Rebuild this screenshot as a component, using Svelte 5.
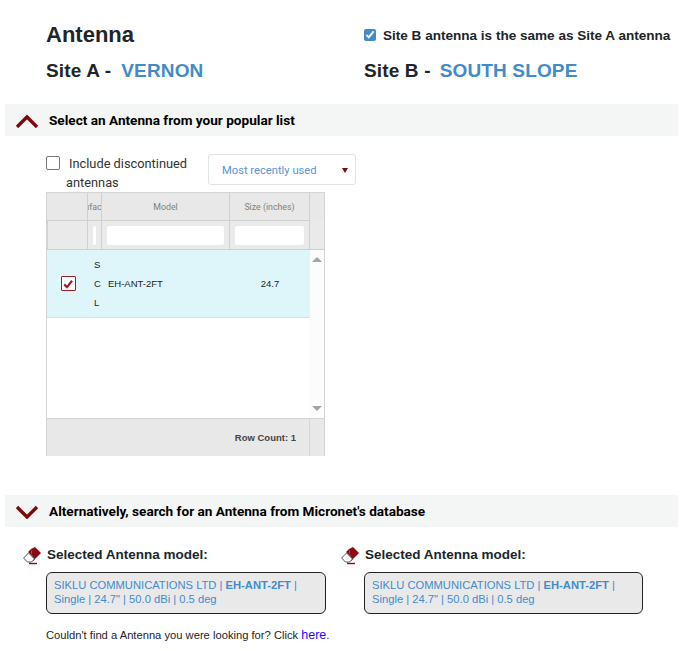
<script lang="ts">
	const selected = [1, 2];
</script>

<div class="page">
	<header class="head">
		<div class="head-col">
			<h1>Antenna</h1>
			<div class="site">Site A -<span class="site-name">VERNON</span></div>
		</div>
		<div class="head-col right">
			<label class="same">
				<input type="checkbox" checked />
				<span>Site B antenna is the same as Site A antenna</span>
			</label>
			<div class="site">Site B -<span class="site-name tight">SOUTH SLOPE</span></div>
		</div>
	</header>

	<section class="bar">
		<svg class="chevron" viewBox="0 0 24 14" width="24" height="14">
			<path d="M2 13 L12 3 L22 13" fill="none" stroke="#7d0a0a" stroke-width="3.4" />
		</svg>
		<span>Select an Antenna from your popular list</span>
	</section>

	<div class="filters">
		<label class="discontinued">
			<span class="box"></span>
			<span class="first">Include discontinued</span>
			<span class="second">antennas</span>
		</label>
		<div class="select">
			<span>Most recently used</span>
			<i class="caret"></i>
		</div>
	</div>

	<div class="grid">
		<div class="row header">
			<div class="c check"></div>
			<div class="c manuf"><span class="clipped">ufac</span></div>
			<div class="c model">Model</div>
			<div class="c size">Size (inches)</div>
			<div class="c tail"></div>
		</div>
		<div class="row filter">
			<div class="c check"></div>
			<div class="c manuf"><i class="field"></i></div>
			<div class="c model"><i class="field"></i></div>
			<div class="c size"><i class="field"></i></div>
			<div class="c tail"></div>
		</div>
		<div class="viewport">
			<div class="rows">
				<div class="row data">
					<div class="c check">
						<span class="tick">
							<svg viewBox="0 0 12 12" width="12" height="12">
								<path d="M2.2 6.4 L5 9.2 L10 2.8" fill="none" stroke="#a01c28" stroke-width="2.2" />
							</svg>
						</span>
					</div>
					<div class="c manuf"><span class="stack">S<br />C<br />L</span></div>
					<div class="c model">EH-ANT-2FT</div>
					<div class="c size">24.7</div>
				</div>
			</div>
			<div class="scroll">
				<i class="up"></i>
				<i class="down"></i>
			</div>
		</div>
		<div class="footer">
			<div class="count">Row Count: 1</div>
			<div class="tail"></div>
		</div>
	</div>

	<section class="bar second-bar">
		<svg class="chevron" viewBox="0 0 24 14" width="24" height="14">
			<path d="M2 2 L12 12 L22 2" fill="none" stroke="#7d0a0a" stroke-width="3.4" />
		</svg>
		<span>Alternatively, search for an Antenna from Micronet's database</span>
	</section>

	<div class="picked">
		{#each selected as id (id)}
			<div class="pick">
				<div class="pick-title">
					<svg class="eraser" viewBox="0 0 18 18" width="18" height="18">
						<path d="M8 2 L12 0 L18 6 L10 14 Z" fill="#8c0a14" />
						<path d="M8 2 L5 5 L12 12 L10 14 Z" fill="#8c0a14" />
						<path d="M0.6 11 L5.5 6 L11.5 12 L8.6 15 L4.4 15 Z" fill="#fff" stroke="#555" stroke-width="1" />
						<path d="M6 16.5 H14" stroke="#8c0a14" stroke-width="1.4" />
					</svg>
					<span>Selected Antenna model:</span>
				</div>
				<div class="pick-box">
					SIKLU COMMUNICATIONS LTD | <b>EH-ANT-2FT</b> | Single | 24.7" | 50.0 dBi | 0.5 deg
				</div>
			</div>
		{/each}
	</div>

	<p class="missing">Couldn't find a Antenna you were looking for? Click <a href="#here">here</a>.</p>
</div>

<style>
	:global(body) {
		margin: 0;
		background: #fff;
		font-family: "Liberation Sans", Arial, sans-serif;
		color: #212529;
	}

	.page {
		width: 680px;
		height: 651px;
		overflow: hidden;
		padding-top: 21px;
		box-sizing: border-box;
	}

	.head {
		display: flex;
		padding-left: 46px;
	}

	.head-col {
		width: 318px;
	}

	.head-col.right {
		width: 316px;
	}

	h1 {
		margin: 0;
		height: 28px;
		font-size: 22px;
		line-height: 28px;
		font-weight: 700;
	}

	.same {
		display: flex;
		align-items: center;
		height: 28px;
		font-size: 13.55px;
		font-weight: 700;
		white-space: nowrap;
	}

	.same input {
		width: 12px;
		height: 12px;
		margin: 0 7px 0 0;
		accent-color: #428bca;
	}

	.site {
		margin-top: 10px;
		font-size: 19px;
		line-height: 24px;
		font-weight: 700;
		letter-spacing: 0.15px;
	}

	.site-name {
		margin-left: 10px;
		color: #428bca;
	}

	.site-name.tight {
		margin-left: 9px;
	}

	.bar {
		display: flex;
		align-items: center;
		height: 32px;
		margin: 21px 2px 0 5px;
		background: #f4f5f5;
		font-family: Roboto, sans-serif;
		font-size: 13.6px;
		font-weight: 700;
		color: #000;
	}

	.chevron {
		margin: 2px 10px 0 10px;
		flex: none;
	}

	.filters {
		display: flex;
		margin: 18px 0 0 46px;
		height: 38px;
	}

	.discontinued {
		position: relative;
		display: block;
		width: 162px;
		font-family: Roboto, sans-serif;
		font-size: 12.8px;
		color: #333;
	}

	.box {
		position: absolute;
		left: 0;
		top: 2px;
		width: 12px;
		height: 12px;
		border: 1px solid #777;
		border-radius: 2px;
	}

	.first {
		position: absolute;
		left: 23px;
		top: 2px;
		white-space: nowrap;
	}

	.second {
		position: absolute;
		left: 20px;
		top: 21px;
	}

	.select {
		display: flex;
		align-items: center;
		justify-content: space-between;
		box-sizing: border-box;
		width: 148px;
		height: 31px;
		padding: 1px 7px 0 13px;
		border: 1px solid #e3e3e3;
		border-radius: 3px;
		font-family: Roboto, sans-serif;
		font-size: 11.2px;
		color: #5b93d3;
	}

	.caret {
		width: 0;
		height: 0;
		border: 3px solid transparent;
		border-top: 5px solid #7d0a0a;
		border-bottom: 0;
	}

	.grid {
		box-sizing: border-box;
		width: 279px;
		height: 264px;
		margin-left: 46px;
		border: 1px solid #d4d4d4;
		border-top: 0;
		font-size: 9.5px;
	}

	.row {
		display: flex;
		box-sizing: border-box;
	}

	.c {
		display: flex;
		align-items: center;
		justify-content: center;
		box-sizing: border-box;
		overflow: hidden;
	}

	.check {
		width: 41px;
	}

	.manuf {
		width: 14px;
	}

	.model {
		width: 128px;
	}

	.size {
		width: 80px;
	}

	.tail {
		width: 14px;
		flex: none;
	}

	.header {
		height: 29px;
		background: #e8e8e8;
		color: #7f7f7f;
		border-top: 1px solid #d4d4d4;
		font-family: Roboto, sans-serif;
		font-size: 8.8px;
	}

	.header .c,
	.filter .c {
		border-right: 1px solid #d0d0d0;
		border-bottom: 1px solid #d0d0d0;
	}

	.header .tail,
	.filter .tail {
		border-right: 0;
		border-bottom: 0;
	}

	.clipped {
		margin-left: -3px;
		white-space: nowrap;
	}

	.filter {
		height: 29px;
		background: #eaeaea;
		box-shadow: inset 1px 0 0 #d0d0d0;
	}

	.filter .c {
		border-bottom: 1px solid #cfcfcf;
	}

	.filter .tail {
		border-bottom: 1px solid #cfcfcf;
	}

	.field {
		display: block;
		height: 19px;
		background: #fff;
		border-radius: 2px;
	}

	.filter .manuf .field {
		width: 3px;
	}

	.filter .model .field {
		width: 117px;
	}

	.filter .size .field {
		width: 69px;
	}

	.viewport {
		display: flex;
		height: 169px;
		box-sizing: border-box;
		border-bottom: 1px solid #d4d4d4;
	}

	.rows {
		flex: 1;
	}

	.scroll {
		position: relative;
		width: 15px;
		background: #fcfcfc;
	}

	.up,
	.down {
		position: absolute;
		left: 2px;
		width: 0;
		height: 0;
		border: 5px solid transparent;
	}

	.up {
		top: 7px;
		border-top: 0;
		border-bottom: 5px solid #a3a3a3;
	}

	.down {
		bottom: 7px;
		border-bottom: 0;
		border-top: 5px solid #a3a3a3;
	}

	.data {
		height: 68px;
		background: #def6f9;
		border-bottom: 1px solid #dedede;
		color: #222;
	}

	.data .model {
		justify-content: flex-start;
		padding-left: 6px;
	}

	.stack {
		margin-left: 5px;
		line-height: 19px;
	}

	.tick {
		display: flex;
		align-items: center;
		justify-content: center;
		box-sizing: border-box;
		width: 15px;
		height: 15px;
		margin-left: 1px;
		background: #fff;
		border: 1px solid #a01c28;
		border-radius: 1px;
	}

	.footer {
		display: flex;
		height: 37px;
		background: #e8e8e8;
	}

	.count {
		flex: 1;
		padding-right: 13px;
		line-height: 37px;
		text-align: right;
		font-weight: 700;
		color: #444;
		border-right: 1px solid #d4d4d4;
	}

	.second-bar {
		margin-top: 39px;
	}

	.picked {
		display: flex;
		margin: 18px 0 0 46px;
	}

	.pick {
		flex: none;
		width: 318px;
	}

	.pick-title {
		position: relative;
		height: 27px;
		padding-left: 1px;
		font-size: 13.5px;
		line-height: 20px;
		font-weight: 700;
	}

	.eraser {
		position: absolute;
		left: -23px;
		top: 2px;
	}

	.pick-box {
		box-sizing: border-box;
		width: 280px;
		height: 42px;
		padding: 5px 7px;
		background: #e9e9e9;
		border: 1px solid #222;
		border-radius: 6px;
		font-size: 11.2px;
		line-height: 14px;
		color: #428bca;
	}

	.pick + .pick .pick-box {
		width: 279px;
	}

	.missing {
		margin: 13px 0 0 46px;
		font-size: 11.2px;
		line-height: 16px;
		color: #212529;
	}

	.missing a {
		font-size: 12.5px;
		color: #1a0dff;
		text-decoration: none;
	}
</style>
